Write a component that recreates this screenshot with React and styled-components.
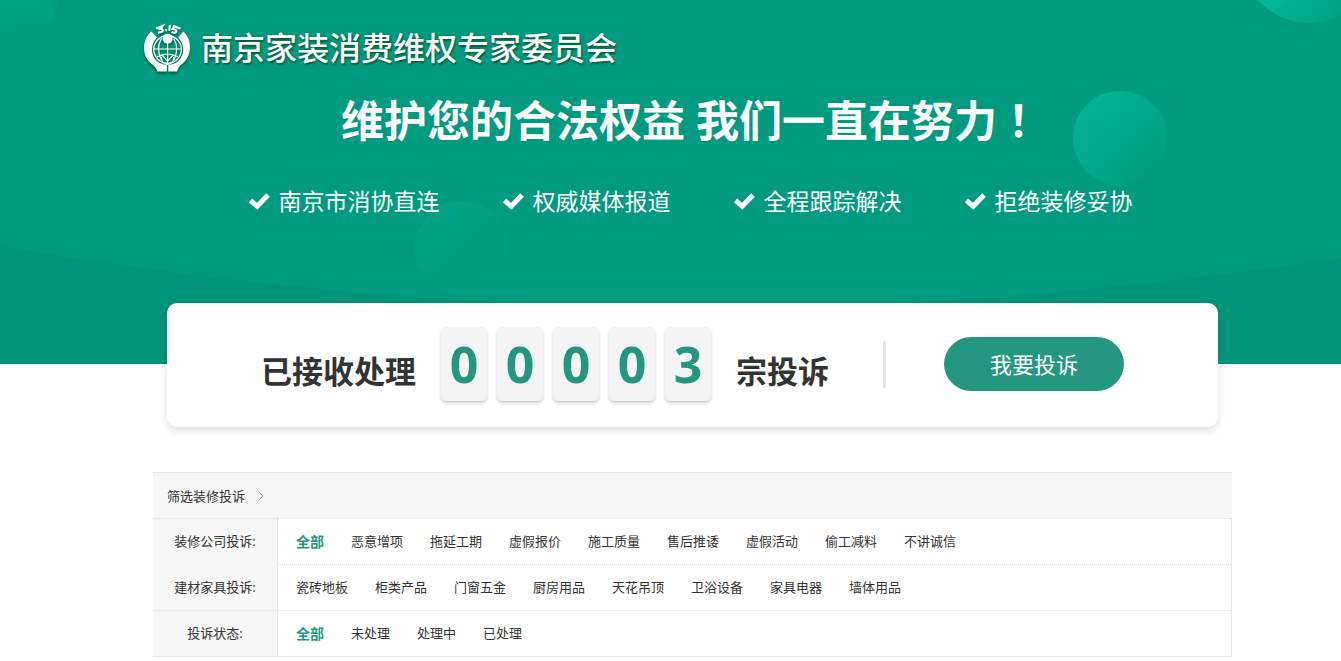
import React from "react";
import styled, { createGlobalStyle } from "styled-components";

const features = ["南京市消协直连", "权威媒体报道", "全程跟踪解决", "拒绝装修妥协"];

const digits = ["0", "0", "0", "0", "3"];

const filters = [
  {
    label: "装修公司投诉:",
    active: "全部",
    items: [
      "全部",
      "恶意增项",
      "拖延工期",
      "虚假报价",
      "施工质量",
      "售后推诿",
      "虚假活动",
      "偷工减料",
      "不讲诚信",
    ],
  },
  {
    label: "建材家具投诉:",
    joined: true,
    items: [
      "瓷砖地板",
      "柜类产品",
      "门窗五金",
      "厨房用品",
      "天花吊顶",
      "卫浴设备",
      "家具电器",
      "墙体用品",
    ],
  },
  {
    label: "投诉状态:",
    active: "全部",
    items: ["全部", "未处理", "处理中", "已处理"],
  },
];

const Backdrop = () => (
  <StyledBackdrop
    viewBox="0 0 1341 364"
    preserveAspectRatio="xMidYMin slice"
    aria-hidden="true"
  >
    <defs>
      <linearGradient id="bright" x1="0" y1="0" x2="1" y2="1">
        <stop offset="0" stopColor="#00b997" />
        <stop offset="0.9" stopColor="#00b997" stopOpacity="0" />
      </linearGradient>
      <linearGradient id="faint" x1="0" y1="0" x2="1" y2="1">
        <stop offset="0" stopColor="#00b090" stopOpacity="0.4" />
        <stop offset="0.9" stopColor="#00b090" stopOpacity="0" />
      </linearGradient>
      <linearGradient id="corner" x1="0.4" y1="0" x2="0.6" y2="1">
        <stop offset="0.4" stopColor="#00b594" stopOpacity="0.6" />
        <stop offset="0.9" stopColor="#00b594" stopOpacity="0" />
      </linearGradient>
      <linearGradient id="edge" x1="0" y1="0" x2="1" y2="1">
        <stop offset="0.3" stopColor="#00c9a6" />
        <stop offset="0.9" stopColor="#00c9a6" stopOpacity="0" />
      </linearGradient>
    </defs>
    <path d="M0 246Q670 362 1341 258V364H0Z" fill="#009478" />
    <circle cx="1120" cy="138" r="47" fill="url(#bright)" />
    <circle cx="1309" cy="-45" r="68" fill="url(#edge)" />
    <circle cx="462" cy="248" r="47" fill="url(#faint)" />
    <circle cx="-12" cy="-8" r="70" fill="url(#corner)" />
  </StyledBackdrop>
);

const Emblem = () => (
  <StyledEmblem viewBox="0 0 48 48" aria-hidden="true">
    <g fill="none" stroke="#fff">
      <path
        d="M13 4.500l6.500-2.500-2.200 2.800c3-.4 3.400 2.200.6 3.200l-3 .8M22.400 6.400l1.600-.3M27 .8l-.8 6M37.500 4.800l-6.500-2.600-1.400 2.800c4 .2 4.800 2.800 2.600 3.600-1.200.4-2.600-.2-3.600-1"
        strokeWidth="2.200"
      />
      <circle cx="24.600" cy="25.500" r="13.800" strokeWidth="1.300" />
      <path
        d="M11 25h27M24.600 18v21M14 33q10.600-6 21 0M18.500 14.500q-6 10 0 22M30.700 14.500q6 10 0 22"
        strokeWidth="1.200"
      />
      <path d="M18.500 33a6.200 6.200 0 1 0 12.200 0M19 31l5.600 6 5.600-6" strokeWidth="1.200" />
    </g>
    <circle cx="24.600" cy="14.800" r="5" fill="#fff" />
    <path
      d="M8.500 7.500C-1 15-1.500 31 7 38.500c4 3.500 6.500 5 7.500 9h9.400v-6.500C15 40.500 9.200 34 9 26c-.1-5 1.500-9 5-12.500Z"
      fill="#fff"
    />
    <path
      d="M40.200 7.500c9 7.500 9 23.500.5 31-4 3.500-5.500 5-6.500 9h-8.900v-6.500c8.900-.5 14.700-7 14.900-15 .1-5-1.500-9-5-12.500Z"
      fill="#fff"
    />
  </StyledEmblem>
);

const Check = () => (
  <StyledCheck viewBox="0 0 21 17" aria-hidden="true">
    <path d="M1.500 7.500L8.200 13.300L19 2" />
  </StyledCheck>
);

const Banner = () => (
  <StyledBanner>
    <Backdrop />
    <BannerContent>
      <Brand href="#">
        <Emblem />
        <BrandName>南京家装消费维权专家委员会</BrandName>
      </Brand>
      <Slogan>
        维护您的合法权益 我们一直在努力<Exclamation>！</Exclamation>
      </Slogan>
      <FeatureList>
        {features.map((feature) => (
          <Feature key={feature}>
            <Check />
            {feature}
          </Feature>
        ))}
      </FeatureList>
    </BannerContent>
  </StyledBanner>
);

const Counter = () => (
  <StyledCounter>
    <Total>
      <TotalText>已接收处理</TotalText>
      <Digits>
        {digits.map((digit, index) => (
          <Digit key={index}>{digit}</Digit>
        ))}
      </Digits>
      <TotalText>宗投诉</TotalText>
    </Total>
    <Divider />
    <ComplainButton type="button">我要投诉</ComplainButton>
  </StyledCounter>
);

const Filters = () => (
  <StyledFilters>
    <FilterTitle>
      筛选装修投诉
      <Chevron viewBox="0 0 6 10" aria-hidden="true">
        <path d="M1 1l4 4-4 4" />
      </Chevron>
    </FilterTitle>
    {filters.map(({ label, items, active, joined }) => (
      <FilterRow key={label}>
        <FilterLabel $joined={joined}>{label}</FilterLabel>
        <FilterItems>
          {items.map((item) => (
            <FilterLink key={item} href="#" $active={item === active}>
              {item}
            </FilterLink>
          ))}
        </FilterItems>
      </FilterRow>
    ))}
  </StyledFilters>
);

const App = () => (
  <>
    <GlobalStyle />
    <Banner />
    <Main>
      <Counter />
      <Filters />
    </Main>
  </>
);

const GlobalStyle = createGlobalStyle`
  * {
    box-sizing: border-box;
  }

  body {
    margin: 0;
    color: #333;
    background: #fff;
    font-family: "Noto Sans", "Noto Sans CJK SC", sans-serif;
    font-size: 13px;
  }

  a {
    color: inherit;
    text-decoration: none;
  }
`;

const StyledBanner = styled.header`
  position: relative;
  height: 364px;
  overflow: hidden;
  color: #fff;
  background: #009b7e;
`;

const StyledBackdrop = styled.svg`
  position: absolute;
  inset: 0;
  width: 100%;
  height: 100%;
`;

const BannerContent = styled.div`
  position: relative;
  padding: 24px 103px 0 143px;
`;

const Brand = styled.a`
  display: flex;
  align-items: center;
  gap: 10px;
  height: 48px;
`;

const StyledEmblem = styled.svg`
  width: 48px;
  height: 48px;
  overflow: visible;
  filter: drop-shadow(0 2px 1px #00603c);
`;

const BrandName = styled.span`
  font-size: 32px;
  line-height: 48px;
  font-weight: 500;
  text-shadow: 1px 2px 2px #00603c, 0 0 3px #007a4c;
`;

const Slogan = styled.h1`
  margin: 14px 0 0;
  font-size: 43px;
  line-height: 64px;
  font-weight: 700;
  text-align: center;
`;

// the TC face centres full-width punctuation in its cell
const Exclamation = styled.span`
  font-family: "Noto Sans CJK TC", sans-serif;
`;

const FeatureList = styled.ul`
  display: flex;
  justify-content: center;
  gap: 63px;
  margin: 31px 0 0;
  padding: 0;
  list-style: none;
`;

const Feature = styled.li`
  display: flex;
  align-items: center;
  gap: 9px;
  font-size: 23px;
  line-height: 34px;
`;

const StyledCheck = styled.svg`
  width: 21px;
  height: 17px;
  fill: none;
  stroke: currentColor;
  stroke-width: 5;
`;

const Main = styled.main`
  position: relative;
  margin: -61px 109px 0 153px;
`;

const StyledCounter = styled.section`
  display: flex;
  align-items: center;
  height: 124px;
  margin: 0 14px;
  padding: 0 94px 2px;
  border-radius: 10px;
  background: #fff;
  box-shadow: 0 4px 8px rgba(0, 0, 0, 0.12);
`;

const Total = styled.div`
  display: flex;
  align-items: baseline;
  gap: 25px;
`;

const TotalText = styled.strong`
  font-size: 31px;
  line-height: 46px;
  font-weight: 700;
  white-space: nowrap;
`;

const Digits = styled.div`
  display: flex;
  gap: 10px;
`;

const Digit = styled.span`
  width: 46px;
  height: 74px;
  border-radius: 5px;
  color: #23977f;
  background: #f4f4f4;
  box-shadow: 0 2px 3px rgba(0, 0, 0, 0.2);
  font-size: 50px;
  line-height: 74px;
  font-weight: 700;
  text-align: center;
`;

const Divider = styled.span`
  flex-shrink: 0;
  width: 3px;
  height: 47px;
  margin: 0 58px 0 54px;
  background: #e5e5e5;
`;

const ComplainButton = styled.button`
  flex-shrink: 0;
  width: 180px;
  height: 54px;
  padding: 0 0 2px;
  border: 0;
  border-radius: 27px;
  color: #fff;
  background: #23977f;
  font-family: inherit;
  font-size: 22px;
  cursor: pointer;
`;

const StyledFilters = styled.section`
  margin-top: 45px;
  border-top: 1px solid #e6e6e6;
  border-bottom: 1px solid #e6e6e6;
`;

const FilterTitle = styled.h2`
  display: flex;
  align-items: center;
  gap: 13px;
  height: 45px;
  margin: 0;
  padding: 0 14px;
  background: #f7f7f7;
  font-size: 13px;
  font-weight: 400;
`;

const Chevron = styled.svg`
  width: 6px;
  height: 10px;
  fill: none;
  stroke: #999;
`;

const FilterRow = styled.div`
  display: grid;
  grid-template-columns: 125px 1fr;
  min-height: 46px;
  border-right: 1px solid #e6e6e6;
`;

const FilterLabel = styled.div`
  display: flex;
  align-items: center;
  justify-content: center;
  padding-bottom: 2px;
  border-top: 1px dotted ${({ $joined }) => ($joined ? "transparent" : "#ddd")};
  border-right: 1px solid #e6e6e6;
  background: #f7f7f7;
`;

const FilterItems = styled.nav`
  display: flex;
  flex-wrap: wrap;
  align-items: center;
  gap: 27px;
  padding: 0 18px 2px;
  border-top: 1px dotted #ddd;
`;

const FilterLink = styled.a`
  color: ${({ $active }) => ($active ? "#23977f" : "inherit")};
  font-size: ${({ $active }) => ($active ? "14px" : "13px")};
  font-weight: ${({ $active }) => ($active ? "700" : "400")};
`;

export default App;
